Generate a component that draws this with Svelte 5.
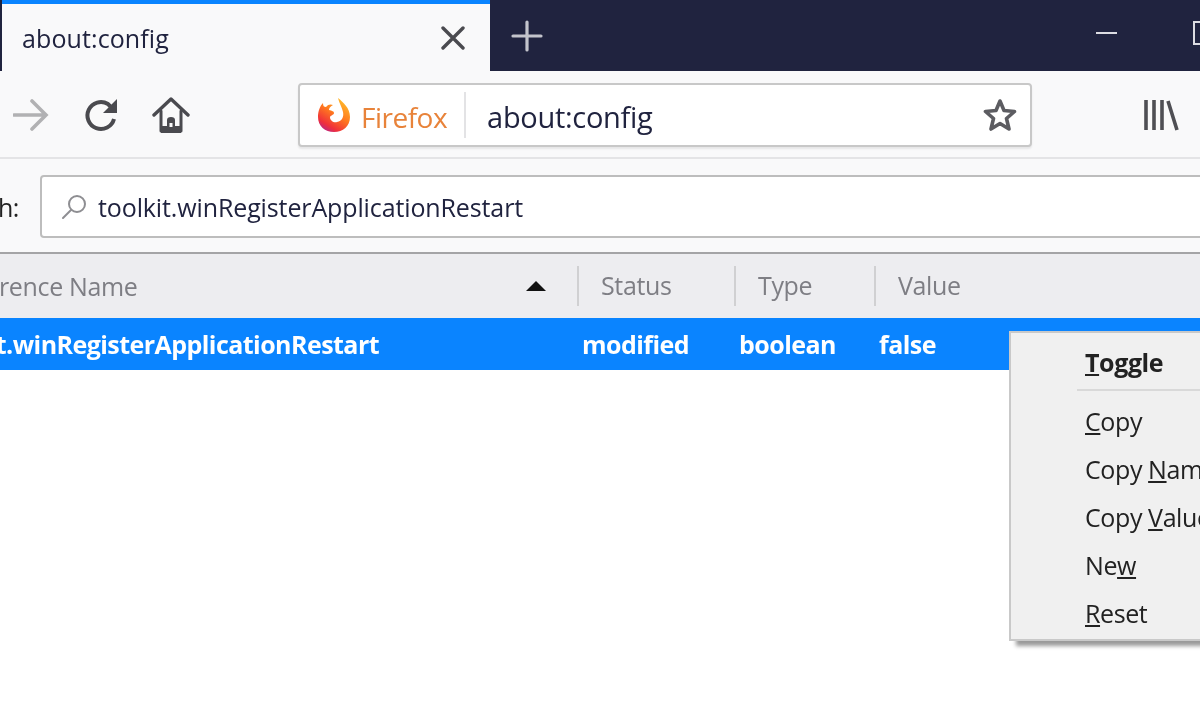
<script>
const columns = [
  { label: 'Status', width: 157 },
  { label: 'Type', width: 140 },
  { label: 'Value', width: 200 }
]

const menuItems = [
  { before: 'Copy ', key: 'N', after: 'ame' },
  { before: 'Copy ', key: 'V', after: 'alue' },
  { before: 'Ne', key: 'w', after: '' },
  { before: '', key: 'R', after: 'eset' }
]
</script>

<div class="page">
  <header class="tabbar">
    <div class="tab">
      <span class="tab-title">about:config</span>
      <svg class="tab-close" viewBox="0 0 24 24" width="24" height="24"><path d="M2 2 L22 22 M22 2 L2 22" /></svg>
    </div>
    <svg class="new-tab" viewBox="0 0 32 32" width="32" height="32"><path d="M16 2 V30 M2 16 H30" /></svg>
    <div class="window-btns">
      <span class="minimize"></span>
      <span class="restore"></span>
    </div>
  </header>

  <nav class="toolbar">
    <svg class="forward" viewBox="0 0 36 34" width="36" height="34"><path d="M1 17 H33 M19 3 L33 17 L19 31" /></svg>
    <svg class="reload" viewBox="0 0 36 36" width="36" height="36"><path d="M30 22 A13.5 13.5 0 1 1 24 7 L29 12" /><path class="solid" d="M33 2 V16 H19 Z" /></svg>
    <svg class="home" viewBox="0 0 38 38" width="38" height="38"><path d="M2 19 L19 3 L36 19" /><path class="thick" d="M9 15 V35 H29 V15" /><path class="solid" d="M9 30 H15 V24 Q15 21 19 21 Q23 21 23 24 V30 H29 V37 H9 Z" /><rect class="door" x="17.5" y="27" width="3" height="4" /></svg>
    <div class="urlbar">
      <svg class="logo" viewBox="0 0 34 36" width="34" height="36">
        <defs>
          <linearGradient id="fx" x1="0.8" y1="0" x2="0.2" y2="1">
            <stop offset="0" stop-color="#ffc22c" />
            <stop offset="0.45" stop-color="#ff7a1e" />
            <stop offset="0.8" stop-color="#f0303a" />
            <stop offset="1" stop-color="#b3258f" />
          </linearGradient>
        </defs>
        <path class="flame" d="M21 1 C26 5 33 11 33 20 C33 29 26 35 17 35 C8 35 1 29 1 20 C1 14 3 9 6 6 C6 9 7 10 9 10 C11 7 14 7 16 8 C13 10 12 11 12 13 C15 14 17 14 17 16 C17 18 14 18 13 20 C13 24 17 26 20 25 C25 24 27 20 26 15 C25 10 22 6 21 1 Z" />
      </svg>
      <span class="brand">Firefox</span>
      <span class="url-sep"></span>
      <span class="url">about:config</span>
      <svg class="star" viewBox="0 0 34 34" width="34" height="34"><path d="M17 3 L21 12.5 L31.5 13.5 L23.5 20.5 L26 31 L17 25.5 L8 31 L10.5 20.5 L2.5 13.5 L13 12.5 Z" /></svg>
    </div>
    <svg class="library" viewBox="0 0 36 32" width="36" height="32"><path d="M3 1 V31 M11 1 V31 M19 1 V31 M25 2 L34 31" /></svg>
  </nav>

  <section class="search-row">
    <span class="search-label">Search:</span>
    <div class="search-box">
      <svg class="glass" viewBox="0 0 26 26" width="26" height="26"><circle cx="16" cy="10" r="8" /><path d="M10 16 L2 24" /></svg>
      <span>toolkit.winRegisterApplicationRestart</span>
    </div>
  </section>

  <div class="table-head">
    <div class="col-name">
      <span class="head-name">Preference Name</span>
      <span class="sort"></span>
    </div>
    {#each columns as col}
      <div class="col-head" style="width: {col.width}px">{col.label}</div>
    {/each}
  </div>

  <div class="row">
    <div class="cell-name"><span>toolkit.winRegisterApplicationRestart</span></div>
    <div class="cell status">modified</div>
    <div class="cell type">boolean</div>
    <div class="cell">false</div>
  </div>

  <div class="menu">
    <div class="item bold"><u>T</u>oggle</div>
    <div class="menu-sep"></div>
    <div class="item"><u>C</u>opy</div>
    {#each menuItems as item}
      <div class="item">{item.before}<u>{item.key}</u>{item.after}</div>
    {/each}
  </div>
</div>

<style>
:global(body) {
  margin: 0;
  background: #fff;
}

.page {
  position: relative;
  width: 1200px;
  height: 720px;
  overflow: hidden;
  background: #fff;
  font-family: "Open Sans", "Noto Sans", sans-serif;
  color: #222;
  filter: blur(0.7px);
}

svg path, svg circle {
  fill: none;
  stroke-linecap: round;
}

.tabbar {
  display: flex;
  align-items: center;
  height: 71px;
  padding-left: 2px;
  background: #20233f;
}

.tab {
  display: flex;
  align-items: center;
  justify-content: space-between;
  box-sizing: border-box;
  width: 488px;
  height: 71px;
  padding: 0 25px 0 20px;
  background: #f9f9fa;
  border-top: 4px solid #0a84ff;
  font-size: 25px;
  letter-spacing: 0.1px;
}

.tab-title {
  color: #20233f;
}

.tab-close path {
  stroke: #4a4a4f;
  stroke-width: 3.4;
}

.new-tab {
  margin: 0 0 0 21px;
}

.new-tab path {
  stroke: #c3c4cc;
  stroke-width: 3.2;
}

.window-btns {
  display: flex;
  align-items: center;
  margin-left: auto;
  padding-bottom: 6px;
}

.minimize {
  display: block;
  width: 21px;
  height: 2px;
  margin-right: 76px;
  background: #dcdce2;
}

.restore {
  display: block;
  width: 18px;
  height: 20px;
  margin-right: -15px;
  border: 2px solid #dcdce2;
}

.toolbar {
  display: flex;
  align-items: center;
  box-sizing: border-box;
  height: 88px;
  padding: 2px 0 0 13px;
  background: #f9f9fa;
  border-bottom: 2px solid #e4e4e6;
}

.forward path {
  stroke: #b1b1b3;
  stroke-width: 3.6;
}

.reload {
  margin-left: 35px;
}

.reload path {
  stroke: #4a4a4f;
  stroke-width: 4;
  stroke-linecap: butt;
}

.reload path.solid {
  fill: #4a4a4f;
  stroke: none;
}

.home {
  margin-left: 32px;
}

.home path {
  stroke: #4a4a4f;
  stroke-width: 3.4;
  stroke-linejoin: round;
}

.home path.thick {
  stroke-width: 3;
}

.home path.solid {
  fill: #4a4a4f;
  stroke: none;
}

.door {
  fill: #f9f9fa;
}

.urlbar {
  display: flex;
  align-items: center;
  box-sizing: border-box;
  width: 734px;
  height: 64px;
  margin-left: 108px;
  padding: 0 13px 0 17px;
  background: #fff;
  border: 2px solid #c8c8c8;
  border-radius: 4px;
  box-shadow: 0 2px 2px rgba(0, 0, 0, 0.08);
}

.flame {
  fill: url(#fx);
  stroke: none;
}

.brand {
  margin-left: 10px;
  padding-top: 3px;
  font-size: 28px;
  letter-spacing: -0.5px;
  color: #e8833a;
}

.url-sep {
  width: 2px;
  height: 46px;
  margin: 0 20px 0 17px;
  background: #e3e3e5;
}

.url {
  flex: 1;
  padding-top: 3px;
  margin-left: 1px;
  font-size: 29px;
  letter-spacing: -0.3px;
  color: #20233f;
}

.star path {
  stroke: #5c5c61;
  stroke-width: 3.6;
  stroke-linejoin: round;
}

.library {
  margin-left: 111px;
}

.library path {
  stroke: #4f4f54;
  stroke-width: 3.6;
  stroke-linecap: butt;
}

.search-row {
  display: flex;
  align-items: center;
  box-sizing: border-box;
  height: 95px;
  padding-top: 2px;
  background: #f9f9fa;
  border-bottom: 2px solid #a4a4a6;
}

.search-label {
  flex: none;
  width: 92px;
  margin: 0 21px 0 -73px;
  text-align: right;
  font-size: 25px;
  color: #222;
  letter-spacing: -0.4px;
}

.search-box {
  display: flex;
  align-items: center;
  gap: 11px;
  box-sizing: border-box;
  flex: 1;
  height: 63px;
  padding: 0 0 0 19px;
  margin-right: -20px;
  background: #fff;
  border: 2px solid #bdbdbd;
  border-radius: 4px;
  font-size: 25px;
  letter-spacing: -0.12px;
  color: #20233f;
}

.glass {
  flex: none;
}

.glass circle, .glass path {
  stroke: #8e8e92;
  stroke-width: 2;
}

.table-head {
  display: flex;
  align-items: center;
  height: 64px;
  background: #ededf0;
  color: #7e7e84;
  font-size: 25px;
  letter-spacing: -0.35px;
}

.col-name {
  display: flex;
  align-items: center;
  justify-content: space-between;
  flex: none;
  box-sizing: border-box;
  width: 638px;
  margin-left: -61px;
  padding-right: 31px;
}

.sort {
  width: 0;
  height: 0;
  border-left: 10px solid transparent;
  border-right: 10px solid transparent;
  border-bottom: 10px solid #111;
}

.col-head {
  flex: none;
  box-sizing: border-box;
  height: 40px;
  line-height: 38px;
  padding-left: 22px;
  border-left: 2px solid #d0d0d2;
}

.row {
  display: flex;
  align-items: center;
  height: 52px;
  background: #0a84ff;
  color: #fff;
  font-size: 25px;
  font-weight: 700;
  letter-spacing: -0.55px;
}

.cell-name {
  display: flex;
  justify-content: flex-end;
  flex: none;
  box-sizing: border-box;
  width: 582px;
  padding-right: 203px;
  white-space: nowrap;
}

.cell-name span {
  flex: none;
}

.cell {
  flex: none;
}

.status {
  width: 157px;
}

.type {
  width: 140px;
}

.menu {
  position: absolute;
  left: 1009px;
  top: 331px;
  box-sizing: border-box;
  width: 260px;
  height: 310px;
  padding: 6px 0 0 74px;
  background: #f0f0f0;
  border: 2px solid #c9c9c9;
  box-shadow: 6px 6px 4px -1px rgba(0, 0, 0, 0.4);
  font-size: 25px;
  letter-spacing: -0.4px;
  color: #222;
}

.item {
  height: 48px;
  line-height: 46px;
  white-space: nowrap;
}

.item.bold {
  height: 50px;
  font-weight: 700;
}

.menu-sep {
  height: 2px;
  margin: 0 0 7px -8px;
  background: #d9d9d9;
}
</style>
